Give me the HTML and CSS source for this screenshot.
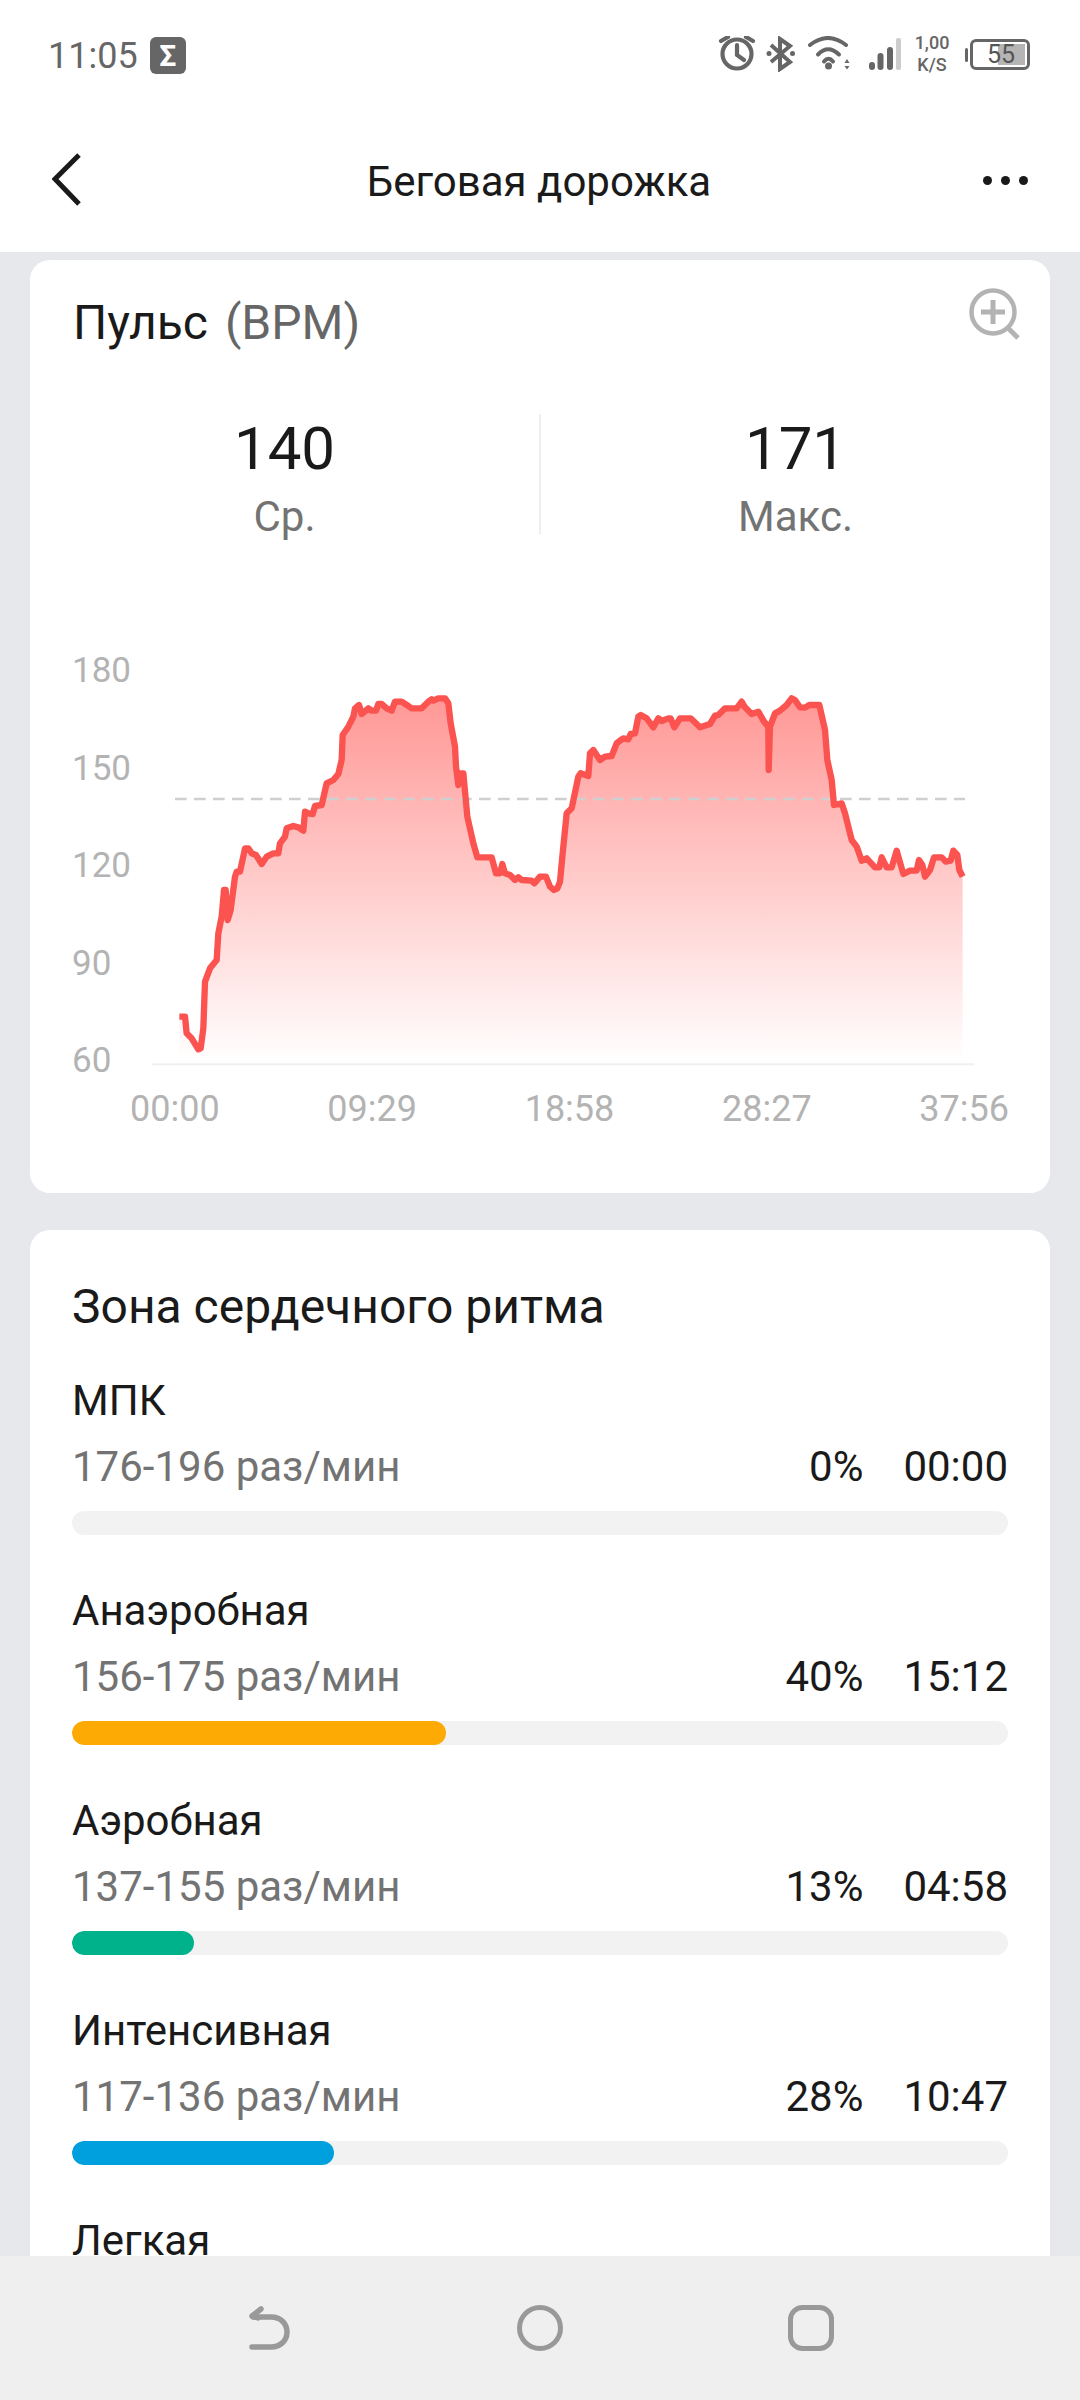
FILE: index.html
```html
<!DOCTYPE html>
<html lang="ru">
<head>
    <meta charset="UTF-8">
    <meta name="viewport" content="width=device-width, initial-scale=1.0">
    <title>Беговая дорожка</title>
    <link rel="stylesheet" href="styles.css">
</head>
<body>
    <div class="top">
        <div class="status-bar">
            <span class="clock">11:05</span>
            <span class="sigma">Σ</span>
            <div class="status-icons">
                <svg class="ic-alarm" width="38" height="36" viewBox="0 0 38 36" fill="none" stroke="#666" stroke-width="4.200" stroke-linecap="round">
                    <circle cx="19" cy="18" r="14.500"/>
                    <path d="M19 9v10l7 5"/>
                    <path d="M3 5l7-4M35 5l-7-4"/>
                </svg>
                <svg class="ic-bt" width="30" height="36" viewBox="0 0 30 36" fill="none" stroke="#666" stroke-width="4">
                    <path d="M5 9l19 17-10 7V3l10 7L5 26"/>
                    <circle cx="3" cy="17.500" r="2.500" fill="#666" stroke="none"/>
                    <circle cx="26.500" cy="17.500" r="2.500" fill="#666" stroke="none"/>
                </svg>
                <svg class="ic-wifi" width="47" height="36" viewBox="0 0 47 36" fill="none" stroke="#666" stroke-width="4" stroke-linecap="round">
                    <path d="M4 9Q22-5 40 9"/>
                    <path d="M12 18.500Q22 8 33 18.500"/>
                    <path d="M18 25.500Q22.500 20 27 25.500"/>
                    <circle cx="22.500" cy="30" r="3.500" fill="#666" stroke="none"/>
                    <path d="M38.500 27l2.500-4 2.500 4zM38.500 30l2.500 3.500 2.500-3.500z" fill="#666" stroke="none"/>
                </svg>
                <svg class="ic-signal" width="32" height="36" viewBox="0 0 32 36">
                    <rect x="0" y="26" width="6" height="8" rx="3" fill="#666"/>
                    <rect x="8.500" y="17" width="6" height="17" rx="3" fill="#666"/>
                    <rect x="18" y="11" width="6" height="23" rx="3" fill="#666"/>
                    <rect x="27" y="2" width="5" height="32" rx="2" fill="#ccc"/>
                </svg>
                <div class="net-speed"><span>1,00</span><span>K/S</span></div>
                <div class="battery">
                    <div class="battery-fill"></div>
                    <span class="battery-num">55</span>
                </div>
            </div>
        </div>
        <div class="nav-bar">
            <svg class="back" width="30" height="56" viewBox="0 0 30 56" fill="none" stroke="#1a1a1a" stroke-width="5">
                <path d="M27 3L3 27l24 25"/>
            </svg>
            <h1 class="page-title">Беговая дорожка</h1>
            <div class="more"><i></i><i></i><i></i></div>
        </div>
    </div>

    <section class="card pulse-card">
        <div class="card-head">
            <span class="card-title">Пульс</span>
            <span class="card-unit">(BPM)</span>
            <svg class="zoom-in" width="54" height="54" viewBox="0 0 54 54" fill="none" stroke="#b3b3b3">
                <circle cx="25" cy="25" r="21.500" stroke-width="4.500"/>
                <path d="M13 25h24M25 13v24" stroke-width="5"/>
                <path d="M40 41l10 10" stroke-width="5"/>
            </svg>
        </div>
        <div class="stats">
            <div class="stat"><div class="stat-num">140</div><div class="stat-label">Ср.</div></div>
            <div class="stat"><div class="stat-num">171</div><div class="stat-label">Макс.</div></div>
        </div>
        <div class="chart">
            <svg id="pulse-chart" class="chart-svg" width="1020" height="469" viewBox="-30 0 3060 1407">
                <defs>
                    <linearGradient id="area-fill" gradientUnits="userSpaceOnUse" x1="0" y1="235" x2="0" y2="1330">
                        <stop offset="0" stop-color="#ff9896"/>
                        <stop offset="1" stop-color="#ffffff"/>
                    </linearGradient>
                </defs>
                <path id="area" fill="url(#area-fill)"/>
                <path d="M336 1333H2803" stroke="#f0f0f0" stroke-width="6"/>
                <path d="M405 537H2775" stroke="#cfcfcf" stroke-width="8" stroke-dasharray="35 22"/>
                <path id="line" fill="none" stroke="#fb5350" stroke-width="19" stroke-linejoin="round"/>
            </svg>
            <div class="y-axis"><span>180</span><span>150</span><span>120</span><span>90</span><span>60</span></div>
            <div class="x-axis"><span>00:00</span><span>09:29</span><span>18:58</span><span>28:27</span><span>37:56</span></div>
        </div>
    </section>

    <section class="card zones-card">
        <h2 class="zones-title">Зона сердечного ритма</h2>
        <div class="zone">
            <div class="zone-name">МПК</div>
            <div class="zone-info"><span class="zone-range">176-196 раз/мин</span><span class="zone-pct">0%</span><span class="zone-time">00:00</span></div>
            <div class="zone-track"></div>
        </div>
        <div class="zone">
            <div class="zone-name">Анаэробная</div>
            <div class="zone-info"><span class="zone-range">156-175 раз/мин</span><span class="zone-pct">40%</span><span class="zone-time">15:12</span></div>
            <div class="zone-track"><div class="zone-bar orange" style="width: 40%"></div></div>
        </div>
        <div class="zone">
            <div class="zone-name">Аэробная</div>
            <div class="zone-info"><span class="zone-range">137-155 раз/мин</span><span class="zone-pct">13%</span><span class="zone-time">04:58</span></div>
            <div class="zone-track"><div class="zone-bar green" style="width: 13%"></div></div>
        </div>
        <div class="zone">
            <div class="zone-name">Интенсивная</div>
            <div class="zone-info"><span class="zone-range">117-136 раз/мин</span><span class="zone-pct">28%</span><span class="zone-time">10:47</span></div>
            <div class="zone-track"><div class="zone-bar blue" style="width: 28%"></div></div>
        </div>
        <div class="zone">
            <div class="zone-name">Легкая</div>
        </div>
    </section>

    <div class="bottom-nav">
        <svg width="44" height="48" viewBox="0 0 44 48" fill="none" stroke="#999" stroke-width="5.500" stroke-linecap="round" stroke-linejoin="round">
            <path d="M4 43H23C33 43 39 36 39 28S33 13 23 13H5"/>
            <path d="M13 5L4 12l6 2"/>
        </svg>
        <svg width="46" height="46" viewBox="0 0 46 46" fill="none" stroke="#999" stroke-width="5">
            <circle cx="23" cy="23" r="20.500"/>
        </svg>
        <svg width="46" height="46" viewBox="0 0 46 46" fill="none" stroke="#999" stroke-width="5">
            <rect x="2.500" y="2.500" width="41" height="41" rx="12"/>
        </svg>
    </div>

    <script src="script.js"></script>
</body>
</html>
```

FILE: styles.css
```css
* {
    margin: 0;
    padding: 0;
    box-sizing: border-box;
    font-family: Roboto, "Noto Sans", sans-serif;
}

body {
    width: 1080px;
    height: 2400px;
    overflow: hidden;
    background-color: #e7e8ec;
    position: relative;
    color: #1a1a1a;
}

.top {
    background-color: #fff;
    height: 252px;
}

.status-bar {
    height: 108px;
    padding: 0 50px 0 48px;
    display: flex;
    align-items: center;
}

.clock {
    margin-top: 3px;
    font-size: 36px;
    color: #666;
}

.sigma {
    width: 36px;
    height: 37px;
    margin: 3px 0 0 12px;
    border-radius: 6px;
    background-color: #666;
    color: #fff;
    font-size: 30px;
    font-weight: bold;
    line-height: 37px;
    text-align: center;
}

.status-icons {
    margin-left: auto;
    display: flex;
    align-items: center;
}

.ic-bt {
    margin-left: 10px;
}

.ic-wifi {
    margin-left: 10px;
}

.ic-signal {
    margin-left: 16px;
}

.net-speed {
    width: 40px;
    margin-left: 11px;
    display: flex;
    flex-direction: column;
    align-items: center;
    font-size: 18px;
    font-weight: 500;
    line-height: 22px;
    color: #666;
}

.battery {
    position: relative;
    width: 60px;
    height: 31px;
    margin-left: 18px;
    border: 3px solid #666;
    border-radius: 6px;
}

.battery::before {
    content: "";
    position: absolute;
    left: -8px;
    top: 6px;
    width: 3px;
    height: 14px;
    background-color: #666;
    border-radius: 2px;
}

.battery-fill {
    position: absolute;
    right: 2px;
    top: 2px;
    bottom: 2px;
    width: 27px;
    background-color: #b5b5b5;
}

.battery-num {
    position: absolute;
    left: 14px;
    top: 0;
    font-size: 25px;
    line-height: 25px;
    color: #555;
}

.nav-bar {
    height: 144px;
    padding: 0 52px;
    display: flex;
    align-items: center;
    justify-content: space-between;
}

.back {
    margin-right: 13px;
}

.page-title {
    margin-top: 3px;
    font-size: 42px;
    font-weight: normal;
}

.more {
    display: flex;
    gap: 9px;
}

.more i {
    width: 9px;
    height: 9px;
    border-radius: 50%;
    background-color: #1a1a1a;
}

.card {
    background-color: #fff;
    border-radius: 20px;
    margin: 8px 30px 0;
}

.pulse-card {
    height: 933px;
}

.card-head {
    position: relative;
    padding: 35px 43px 0;
    display: flex;
    align-items: center;
    gap: 17px;
    font-size: 48px;
    line-height: 56px;
}

.card-unit {
    color: #666;
}

.zoom-in {
    position: absolute;
    right: 28px;
    top: 27px;
}

.stats {
    margin-top: 63px;
    display: flex;
}

.stat {
    flex: 1;
    height: 120px;
    text-align: center;
}

.stat:first-child {
    border-right: 2px solid #eee;
}

.stat-num {
    font-size: 60px;
    line-height: 70px;
}

.stat-label {
    margin-top: 15px;
    font-size: 42px;
    line-height: 36px;
    color: #737373;
}

.chart {
    position: relative;
    margin-top: 86px;
}

.chart-svg {
    display: block;
}

.y-axis {
    position: absolute;
    left: 42px;
    top: 31px;
    height: 430px;
    display: flex;
    flex-direction: column;
    justify-content: space-between;
    font-size: 35px;
    line-height: 40px;
    color: #b3b3b3;
}

.x-axis {
    padding: 0 41px 0 100px;
    display: flex;
    justify-content: space-between;
    font-size: 36px;
    line-height: 40px;
    color: #b3b3b3;
}

.zones-card {
    margin-top: 37px;
    height: 1100px;
    padding: 49px 42px 0;
}

.zones-title {
    font-size: 48px;
    font-weight: normal;
    line-height: 56px;
    margin-bottom: 44px;
}

.zone {
    height: 210px;
}

.zone-name {
    font-size: 42px;
    line-height: 44px;
}

.zone-info {
    margin-top: 22px;
    display: flex;
    font-size: 42px;
    line-height: 44px;
}

.zone-range {
    color: #737373;
    margin-right: auto;
}

.zone-time {
    margin-left: 40px;
}

.zone-track {
    height: 24px;
    margin-top: 22px;
    background-color: #f2f2f2;
    border-radius: 12px;
    overflow: hidden;
}

.zone-bar {
    height: 100%;
    border-radius: 12px;
}

.orange {
    background-color: #fdaa05;
}

.green {
    background-color: #00b28b;
}

.blue {
    background-color: #009fdd;
}

.bottom-nav {
    position: absolute;
    left: 0;
    right: 0;
    bottom: 0;
    height: 144px;
    background-color: #efefef;
    padding: 0 246px 0 248px;
    display: flex;
    align-items: center;
    justify-content: space-between;
}
```

FILE: script.js
```js
// график пульса: точки в единицах viewBox (1 px = 3 единицы)
const part1 = "418,1190 435,1190 440,1240 455,1255 475,1288 482,1285 490,1225 495,1085 510,1045 530,1020 535,940 545,890 552,810 557,810 563,900 572,870 585,770 590,755 600,755 615,685 625,685 635,700 648,705 665,732 680,710 700,700 715,700 720,670 735,650 740,625 760,618 775,622 790,632 795,575 805,580 818,582 825,558 845,555 860,490 880,480 895,462 905,420 908,345 925,320 940,290 945,265 957,255 965,282 985,265 995,272 1008,272 1015,252 1025,252 1040,265 1055,272 1065,245 1085,245 1105,258 1115,265 1145,265 1165,245 1175,238 1180,242 1195,235 1215,235 1225,250 1232,310 1245,380 1248,440 1255,495 1262,460 1270,460 1282,590 1300,670 1312,712 1355,712 1368,760 1380,760 1387,732 1395,760 1410,765 1425,780 1435,772 1445,780 1475,782 1483,790";
const part2 = "0,770 18,770 30,800 42,810 52,805 60,785 68,700 80,580 95,565 115,470 122,460 145,468 150,400 160,390 180,420 195,410 215,408 230,370 240,362 250,355 265,358 272,342 285,340 295,290 302,285 320,295 340,322 355,295 365,303 385,295 392,295 403,322 420,295 452,295 480,322 510,312 525,287 535,285 555,265 590,265 605,245 615,262 635,282 655,275 672,305 685,320 686,450 690,320 705,280 720,272 740,255 755,235 765,240 780,262 795,263 808,255 838,255 855,330 862,420 875,480 882,555 905,550 915,580 935,660 950,680 965,722 980,715 1005,742 1018,742 1025,712 1040,742 1055,742 1070,692 1090,762 1110,752 1130,752 1137,720 1147,735 1155,770 1170,750 1182,712 1205,712 1217,725 1232,722 1240,692 1252,705 1258,750 1268,770";

const points = part1.split(" ").map(p => p.split(",").map(Number));
part2.split(" ").forEach(p => {
    const [x, y] = p.split(",").map(Number);
    points.push([x + 1500, y]);
});

const linePath = "M" + points.map(p => p.join(" ")).join("L");
document.getElementById("line").setAttribute("d", linePath);
document.getElementById("area").setAttribute("d", linePath + "L2768 1330L418 1330Z");
```
